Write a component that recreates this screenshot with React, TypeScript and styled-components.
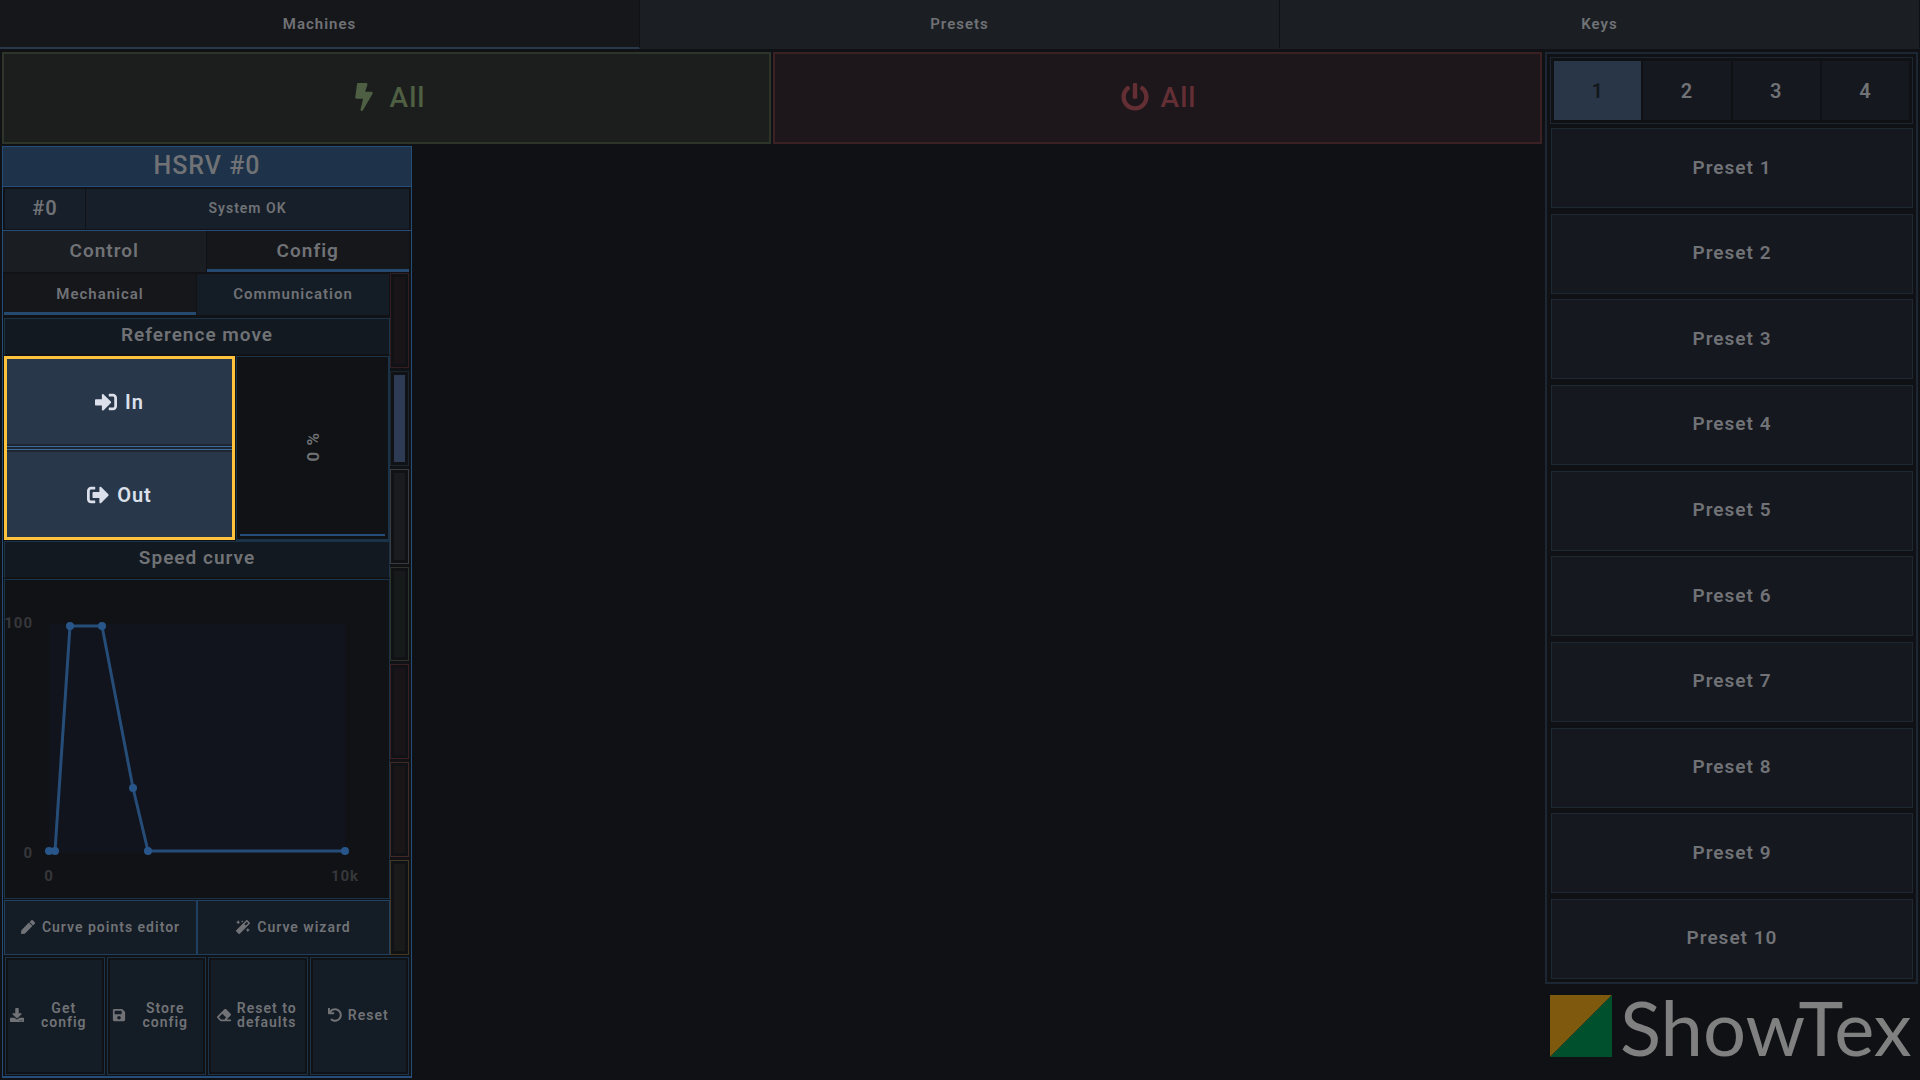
import React from "react";
import styled, { createGlobalStyle, css } from "styled-components";
import {
  FaBolt,
  FaPowerOff,
  FaSignInAlt,
  FaSignOutAlt,
  FaDownload,
  FaSave,
  FaEraser,
  FaUndo,
  FaPen,
  FaMagic,
} from "react-icons/fa";

const c = {
  page: "#101114",
  text: "#707276",
  blue: "#254d7a",
  line: "#1b3349",
  cell: "#141c25",
  header: "#121920",
  inset: "#111215",
};

const GlobalStyle = createGlobalStyle`
  * { box-sizing: border-box; }
  body {
    margin: 0;
    background: ${c.page};
    color: ${c.text};
    font-family: Roboto, "Liberation Sans", sans-serif;
    font-weight: 600;
    letter-spacing: 1px;
  }
  button {
    font: inherit;
    letter-spacing: inherit;
    color: inherit;
    margin: 0;
    padding: 0;
    border: 0;
    background: none;
    cursor: pointer;
  }
  h2, h3, p { margin: 0; font: inherit; }
`;

const Page = styled.div`
  height: 100vh;
  display: grid;
  grid-template-rows: 49px minmax(0, 1fr);
  gap: 3px;
`;

const TopNav = styled.nav`
  display: grid;
  grid-template-columns: repeat(3, 1fr);
`;

const TopTab = styled.button<{ $active?: boolean }>`
  font-size: 15px;
  background: ${(p) => (p.$active ? "#16171b" : "#1b1f23")};
  border-right: 1px solid ${c.page};
  border-bottom: 2px solid ${(p) => (p.$active ? "#2a384c" : "#1b1f23")};
`;

const Body = styled.div`
  display: grid;
  grid-template-columns: minmax(0, 1fr) 373px;
  gap: 3px;
  padding: 0 2px;
  min-height: 0;
`;

const Main = styled.main`
  display: grid;
  grid-template-rows: 92px minmax(0, 1fr);
  gap: 2px;
  min-height: 0;
`;

const AllRow = styled.div`
  display: grid;
  grid-template-columns: 1fr 1fr;
  gap: 2px;
`;

const AllButton = styled.button<{ $tone: "on" | "off" }>`
  display: flex;
  align-items: center;
  justify-content: center;
  gap: 12px;
  padding: 0 0 2px 2px;
  font-size: 28px;
  font-weight: 500;
  ${(p) =>
    p.$tone === "on"
      ? css`
          color: #4f5f43;
          background: #1b1e1d;
          border: 2px solid #2d352a;
        `
      : css`
          color: #642f34;
          background: #1d171b;
          border: 2px solid #3b2024;
        `}
`;

const Machine = styled.section`
  width: 410px;
  min-height: 0;
  margin-bottom: 2px;
  display: grid;
  grid-template-rows: 40px 44px 41px minmax(0, 1fr) 119px;
  border: 1px solid ${c.blue};
  border-bottom-width: 2px;
  background: ${c.inset};
`;

const MachineTitle = styled.h2`
  display: flex;
  align-items: center;
  justify-content: center;
  font-size: 25px;
  font-weight: 500;
  padding-bottom: 2px;
  background: #1e334a;
  border-bottom: 1px solid ${c.blue};
`;

const StatusRow = styled.div`
  display: grid;
  grid-template-columns: 80px 1fr;
  gap: 1px;
  padding: 2px 2px 1px;
  border-bottom: 1px solid ${c.blue};
`;

const StatusCell = styled.div<{ $large?: boolean }>`
  display: grid;
  place-items: center;
  padding-bottom: 2px;
  font-size: ${(p) => (p.$large ? 20 : 14)}px;
  background: #17202a;
`;

const Tabs = styled.div`
  display: grid;
  grid-template-columns: 1fr 1fr;
  gap: 1px;
  padding-right: 2px;
`;

const Tab = styled.button<{ $active?: boolean }>`
  font-size: 19px;
  padding-bottom: 2px;
  background: ${(p) => (p.$active ? "#16171b" : "#1a1d21")};
  box-shadow: ${(p) => (p.$active ? "inset 0 -3px #25496f" : "none")};
`;

const SubTabs = styled(Tabs)`
  padding-right: 1px;
`;

const SubTab = styled(Tab)`
  font-size: 15px;
  background: ${(p) => (p.$active ? "#16171b" : c.cell)};
`;

const MachineBody = styled.div`
  display: grid;
  grid-template-columns: minmax(0, 1fr) 19px;
  padding: 1px 2px 2px 1px;
  min-height: 0;
`;

const Config = styled.div`
  display: grid;
  grid-template-rows: 41px 41px 185px 38px minmax(0, 1fr) 56px;
  padding-top: 1px;
  min-height: 0;
`;

const SectionTitle = styled.h3`
  display: flex;
  align-items: center;
  justify-content: center;
  font-size: 19px;
  padding-bottom: 4px;
  background: ${c.header};
  border: 1px solid ${c.line};
  border-bottom: 2px solid ${c.inset};
`;

const FirstTitle = styled(SectionTitle)`
  margin-top: 3px;
`;

const Reference = styled.div`
  display: grid;
  grid-template-columns: 231px 1fr;
  gap: 1px;
`;

const Moves = styled.div`
  display: grid;
  grid-template-rows: 1fr 4px 1fr;
  gap: 2px;
  margin-bottom: 1px;
  border: 3px solid #ffc23c;
  background: #20262f;
`;

const MoveRule = styled.div`
  border-top: 1px solid #3a6aa0;
  border-bottom: 1px solid #3a6aa0;
`;

const MoveButton = styled.button`
  display: flex;
  align-items: center;
  justify-content: center;
  gap: 8px;
  font-size: 20px;
  color: #dbe0ea;
  background: #283749;
`;

const Position = styled.div`
  display: flex;
  flex-direction: column;
  padding: 3px;
  border: 1px solid ${c.line};
  border-width: 1px 2px 2px 1px;
`;

const PositionValue = styled.div`
  flex: 1;
  display: grid;
  place-items: center;
  border-bottom: 2px solid ${c.blue};
  font-size: 17px;

  span {
    writing-mode: vertical-rl;
    transform: rotate(180deg);
  }
`;

const ChartBox = styled.div`
  border: 1px solid ${c.line};
  min-height: 0;

  svg { display: block; width: 100%; height: 100%; }
  text { font-size: 15px; font-weight: 700; fill: #36373b; letter-spacing: 1px; }
`;

const CurveButtons = styled.div`
  display: grid;
  grid-template-columns: 1fr 1fr;
  padding-top: 1px;
`;

const CurveButton = styled.button`
  display: flex;
  align-items: center;
  justify-content: center;
  gap: 7px;
  padding-bottom: 2px;
  font-size: 14px;
  background: ${c.cell};
  border: 1px solid #1f4061;
`;

const Meters = styled.div`
  display: grid;
  grid-template-rows: repeat(7, 1fr);
  gap: 3px;
`;

const Meter = styled.div<{ $line: string; $fill: string }>`
  padding: 3px;
  border: 1px solid ${(p) => p.$line};
  background: ${(p) => p.$fill} content-box;
`;

const Footer = styled.div`
  display: grid;
  grid-template-columns: repeat(4, 1fr);
  gap: 2px;
  padding: 0 2px 1px;
`;

const FooterButton = styled.button`
  display: flex;
  padding: 2px;
  font-size: 14px;
  line-height: 14px;
  border: 1px solid ${c.line};
`;

const FooterLabel = styled.span`
  flex: 1;
  align-self: stretch;
  display: flex;
  align-items: center;
  justify-content: center;
  gap: 6px;
  padding: 0 4px 2px 2px;
  background: ${c.cell};

  svg { flex: none; }
`;

const Side = styled.aside`
  display: grid;
  grid-template-columns: minmax(0, 1fr);
  grid-template-rows: minmax(0, 1fr) 96px;
  min-height: 0;
`;

const Presets = styled.div`
  display: flex;
  flex-direction: column;
  padding: 3px;
  border: 2px solid #1c2733;
`;

const Pages = styled.div`
  display: grid;
  grid-template-columns: repeat(4, 1fr);
  gap: 2px;
  height: 67px;
  padding: 3px;
  border: 1px solid #1c2733;
`;

const PageButton = styled.button<{ $active?: boolean }>`
  font-size: 20px;
  color: ${(p) => (p.$active ? "#14181d" : c.text)};
  background: ${(p) => (p.$active ? "#283647" : "#15181f")};
`;

const PresetList = styled.div`
  flex: 1;
  display: flex;
  flex-direction: column;
  justify-content: space-between;
  padding: 4px 0 0 1px;
`;

const PresetButton = styled.button`
  height: 80px;
  padding-bottom: 2px;
  font-size: 19px;
  background: #15181f;
  border: 1px solid #1d2832;
`;

const Logo = styled.div`
  display: flex;
  padding: 11px 0 0 5px;
  gap: 8px;

  svg { flex: none; }
`;

const Wordmark = styled.span`
  font-family: Lato, "Liberation Sans", sans-serif;
  font-weight: 400;
  font-size: 76px;
  line-height: 64px;
  letter-spacing: 0;
  color: #808080;
`;

const meters = [
  ["#351e22", "#181417"],
  ["#1b2530", "#2d3c54"],
  ["#3a3b3e", "#1a1b1e"],
  ["#2c3329", "#161a1b"],
  ["#3b1f23", "#181417"],
  ["#412925", "#1a1618"],
  ["#423823", "#1a1a1b"],
];

const actions = [
  { icon: FaDownload, label: "Get config" },
  { icon: FaSave, label: "Store config" },
  { icon: FaEraser, label: <>Reset to<br />defaults</> },
  { icon: FaUndo, label: "Reset" },
];

const curve: [number, number][] = [
  [44, 271], [50, 271], [65, 46], [97, 46], [128, 208], [143, 271], [340, 271],
];

const SpeedCurve = () => (
  <svg viewBox="0 0 384 318" preserveAspectRatio="xMinYMin meet" role="img" aria-label="Speed curve">
    <rect x="44" y="44" width="296" height="229" fill="#11141c" />
    <polyline points={curve.join(" ")} fill="none" stroke="#254d78" strokeWidth="3" />
    {curve.map(([x, y]) => (
      <circle key={x} cx={x} cy={y} r="4" fill="#29568a" />
    ))}
    <text x="28" y="48" textAnchor="end">100</text>
    <text x="28" y="278" textAnchor="end">0</text>
    <text x="44" y="301" textAnchor="middle">0</text>
    <text x="340" y="301" textAnchor="middle">10k</text>
  </svg>
);

export default function App() {
  return (
    <>
      <GlobalStyle />
      <Page>
        <TopNav>
          <TopTab $active>Machines</TopTab>
          <TopTab>Presets</TopTab>
          <TopTab>Keys</TopTab>
        </TopNav>
        <Body>
          <Main>
            <AllRow>
              <AllButton $tone="on"><FaBolt size={28} />All</AllButton>
              <AllButton $tone="off"><FaPowerOff size={28} />All</AllButton>
            </AllRow>
            <Machine>
              <MachineTitle>HSRV #0</MachineTitle>
              <StatusRow>
                <StatusCell $large>#0</StatusCell>
                <StatusCell>System OK</StatusCell>
              </StatusRow>
              <Tabs>
                <Tab>Control</Tab>
                <Tab $active>Config</Tab>
              </Tabs>
              <MachineBody>
                <Config>
                  <SubTabs>
                    <SubTab $active>Mechanical</SubTab>
                    <SubTab>Communication</SubTab>
                  </SubTabs>
                  <FirstTitle>Reference move</FirstTitle>
                  <Reference>
                    <Moves>
                      <MoveButton><FaSignInAlt size={22} />In</MoveButton>
                      <MoveRule />
                      <MoveButton><FaSignOutAlt size={22} />Out</MoveButton>
                    </Moves>
                    <Position>
                      <PositionValue><span>0 %</span></PositionValue>
                    </Position>
                  </Reference>
                  <SectionTitle>Speed curve</SectionTitle>
                  <ChartBox><SpeedCurve /></ChartBox>
                  <CurveButtons>
                    <CurveButton><FaPen size={14} />Curve points editor</CurveButton>
                    <CurveButton><FaMagic size={14} />Curve wizard</CurveButton>
                  </CurveButtons>
                </Config>
                <Meters>
                  {meters.map(([line, fill], i) => (
                    <Meter key={i} $line={line} $fill={fill} />
                  ))}
                </Meters>
              </MachineBody>
              <Footer>
                {actions.map(({ icon: Icon, label }, i) => (
                  <FooterButton key={i}>
                    <FooterLabel><Icon size={14} /><span>{label}</span></FooterLabel>
                  </FooterButton>
                ))}
              </Footer>
            </Machine>
          </Main>
          <Side>
            <Presets>
              <Pages>
                {[1, 2, 3, 4].map((n) => (
                  <PageButton key={n} $active={n === 1}>{n}</PageButton>
                ))}
              </Pages>
              <PresetList>
                {Array.from({ length: 10 }, (_, i) => (
                  <PresetButton key={i}>Preset {i + 1}</PresetButton>
                ))}
              </PresetList>
            </Presets>
            <Logo>
              <svg width="62" height="62" viewBox="0 0 62 62" aria-hidden="true">
                <path d="M0 0H62L0 62Z" fill="#7f590e" />
                <path d="M62 0V62H0Z" fill="#00502d" />
              </svg>
              <Wordmark>ShowTex</Wordmark>
            </Logo>
          </Side>
        </Body>
      </Page>
    </>
  );
}
